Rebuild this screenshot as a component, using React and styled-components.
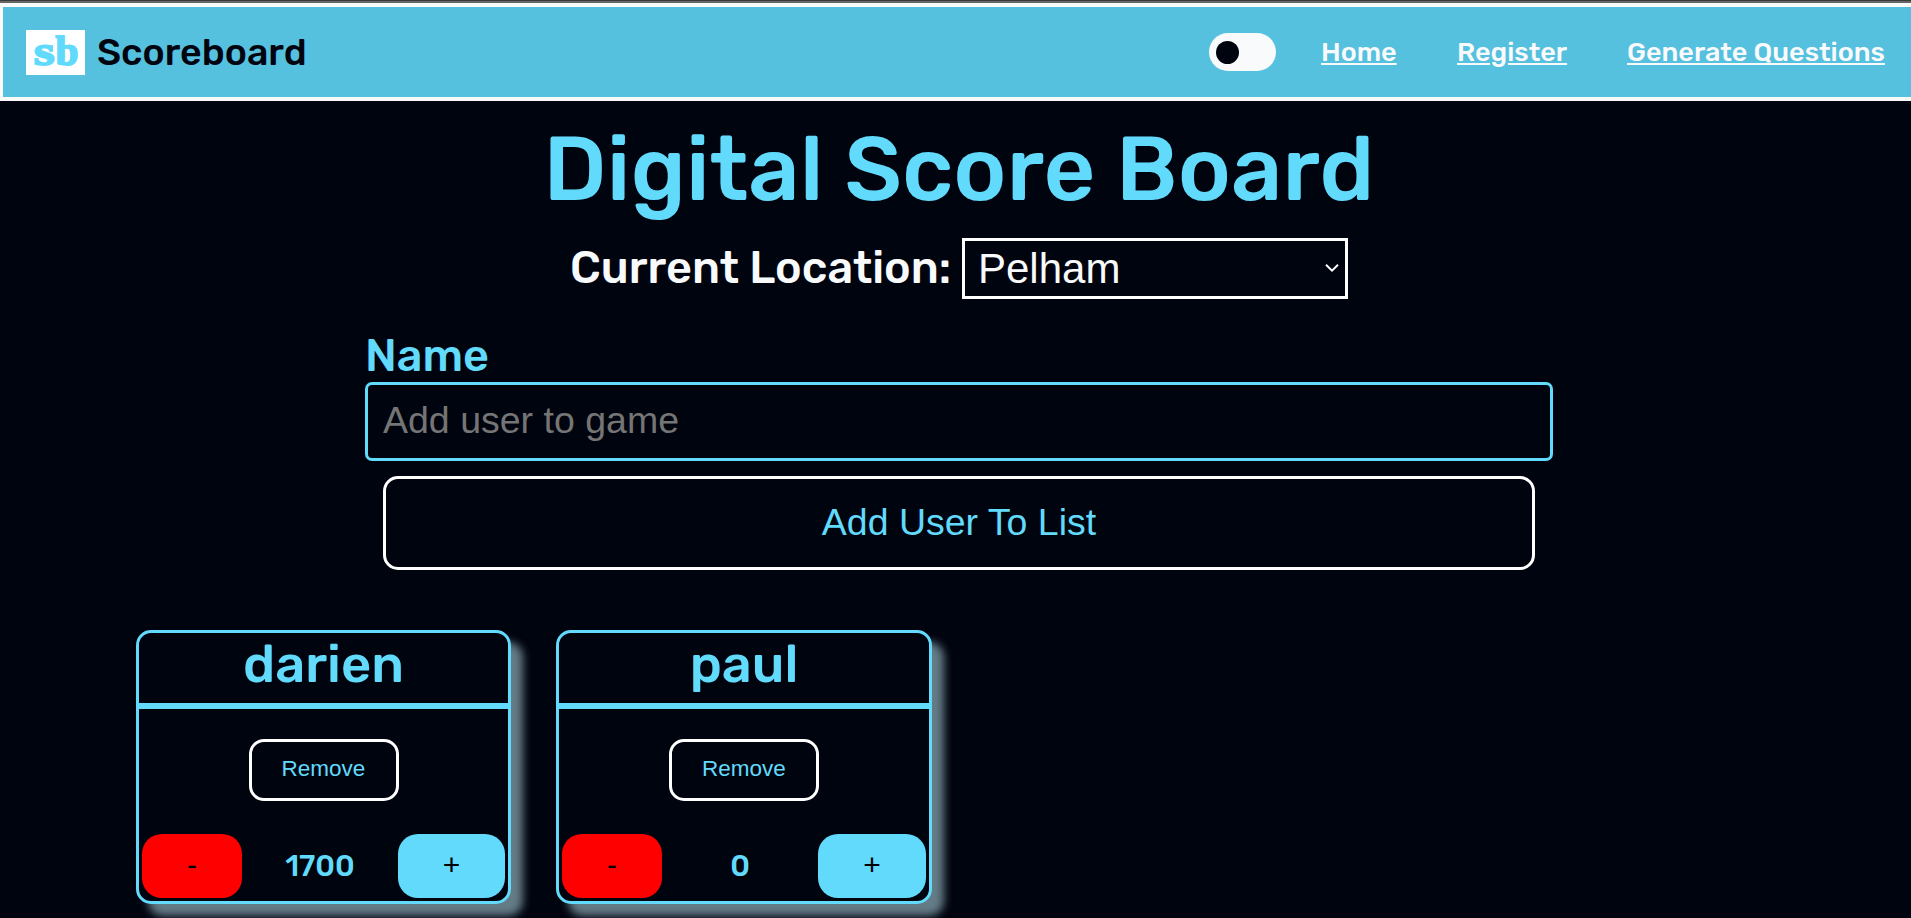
import React from "react";
import styled, { createGlobalStyle } from "styled-components";

const accent = "#61dafb";
const ink = "#00040f";
const light = "#f9fafb";
const display = `Rubik, Roboto, "Liberation Sans", sans-serif`;
const plain = `Arial, "Liberation Sans", sans-serif`;

const GlobalStyle = createGlobalStyle`
  *, *::before, *::after { box-sizing: border-box; }
  html, body { margin: 0; background: ${ink}; }
  body { overflow: hidden; font-family: ${display}; font-weight: 500; color: ${light}; }
  h1, h2, p { margin: 0; font-weight: 500; }
`;

const Page = styled.div`
  height: 100vh;
  overflow: hidden;
`;

const TopEdge = styled.div`
  height: 3px;
  border-top: 1px solid #3b3b3b;
  background: #666;
`;

const Header = styled.header`
  display: flex;
  align-items: center;
  justify-content: space-between;
  height: 98px;
  padding: 0 26px 0 23px;
  background: #56c0df;
  border: 4px solid ${light};
  border-left-width: 3px;
  border-right: 0;
`;

const Brand = styled.div`
  display: flex;
  align-items: center;
  gap: 12px;
`;

const Logo = styled.svg`
  display: block;
  overflow: visible;
  width: 59px;
  height: 45px;
  background: #fff;
`;

const LogoLetter = styled.text`
  font: 700 43px "Liberation Serif", serif;
  fill: ${accent};
  stroke: ${accent};
  stroke-width: 1.8px;
`;

const BrandName = styled.span`
  font-size: 37.5px;
  line-height: 45px;
  color: ${ink};
`;

const Nav = styled.nav`
  display: flex;
  align-items: center;
`;

const Toggle = styled.button`
  display: flex;
  align-items: center;
  width: 67px;
  height: 38px;
  margin-right: 45px;
  padding: 0 7px;
  border: 0;
  border-radius: 19px;
  background: ${light};
`;

const Knob = styled.span`
  width: 23px;
  height: 23px;
  border-radius: 50%;
  background: ${ink};
`;

const NavLink = styled.a`
  width: ${(p) => p.$width}px;
  margin-left: ${(p) => p.$gap || 0}px;
  white-space: nowrap;
  font-size: 27px;
  line-height: 34px;
  color: ${light};
  text-decoration: underline;
`;

const Title = styled.h1`
  margin-top: 15px;
  padding-left: 7px;
  text-align: center;
  font-size: 90px;
  line-height: 107px;
  color: ${accent};
`;

const LocationRow = styled.div`
  display: flex;
  align-items: center;
  justify-content: flex-end;
  width: 1348px;
  height: 61px;
  margin-top: 15px;
`;

const LocationLabel = styled.label`
  width: 392px;
  padding-bottom: 2px;
  white-space: nowrap;
  font-size: 45px;
  line-height: 54px;
`;

const SelectBox = styled.div`
  position: relative;
  width: 386px;
  height: 61px;
`;

const Select = styled.select`
  appearance: none;
  width: 100%;
  height: 100%;
  padding: 0 13px;
  border: 3px solid #fff;
  border-radius: 0;
  background: ${ink};
  color: ${light};
  font: 400 42px ${plain};
`;

const Chevron = styled.svg`
  position: absolute;
  right: 9px;
  top: 25px;
  width: 14px;
  height: 10px;
  pointer-events: none;
`;

const Form = styled.form`
  display: flex;
  flex-direction: column;
  width: 1188px;
  margin: 30px 0 0 365px;
`;

const FieldLabel = styled.label`
  font-size: 45px;
  line-height: 53px;
  color: ${accent};
`;

const Input = styled.input`
  height: 79px;
  padding: 0 15px 2px;
  border: 3px solid ${accent};
  border-radius: 7px;
  background: ${ink};
  color: ${light};
  font: 400 37.5px ${plain};
  &::placeholder { color: #757575; }
`;

const OutlineButton = styled.button`
  border: 3px solid #fff;
  border-radius: 15px;
  background: ${ink};
  color: ${accent};
  padding: 0 0 2px;
  font: 400 22.5px ${plain};
`;

const AddButton = styled(OutlineButton)`
  height: 94px;
  margin: 15px 18px 0;
  padding-bottom: 1px;
  font-size: 37.5px;
`;

const RemoveButton = styled(OutlineButton)`
  width: 150px;
  height: 62px;
  margin: 30px auto 33px;
`;

const Cards = styled.section`
  display: flex;
  gap: 45px;
  margin: 60px 0 0 136px;
`;

const Card = styled.article`
  display: flex;
  flex-direction: column;
  width: ${(p) => p.$width}px;
  height: 274px;
  border: 3px solid ${accent};
  border-radius: 15px;
  background: ${ink};
  box-shadow: 12px 12px 8px #647c87;
`;

const PlayerName = styled.h2`
  height: 76px;
  border-bottom: 6px solid ${accent};
  text-align: center;
  font-size: 52.5px;
  line-height: 62px;
  color: ${accent};
`;

const ScoreRow = styled.div`
  display: flex;
  justify-content: space-between;
  align-items: center;
  padding: 0 3px;
`;

const ScoreButton = styled.button`
  width: ${(p) => p.$width}px;
  height: 64px;
  padding: 0 0 2px;
  border: 0;
  border-radius: 20px;
  background: ${(p) => p.$fill};
  color: #000;
  font: 400 30px ${plain};
`;

const Score = styled.p`
  font-size: 30px;
  color: ${accent};
`;

const players = [
  { name: "darien", score: 1700, width: 375 },
  { name: "paul", score: 0, width: 376 },
];

export default function App() {
  return (
    <>
      <GlobalStyle />
      <Page>
        <TopEdge />
        <Header>
          <Brand>
            <Logo viewBox="0 0 59 45">
              <LogoLetter x="8" y="34.5" textLength="21" lengthAdjust="spacingAndGlyphs">s</LogoLetter>
              <LogoLetter x="29.5" y="34.5" textLength="23" lengthAdjust="spacingAndGlyphs">b</LogoLetter>
            </Logo>
            <BrandName>Scoreboard</BrandName>
          </Brand>
          <Nav>
            <Toggle aria-label="Toggle theme"><Knob /></Toggle>
            <NavLink href="#" $width={76}>Home</NavLink>
            <NavLink href="#" $width={110} $gap={60}>Register</NavLink>
            <NavLink href="#" $width={258} $gap={60}>Generate Questions</NavLink>
          </Nav>
        </Header>
        <Title>Digital Score Board</Title>
        <LocationRow>
          <LocationLabel htmlFor="location">Current Location:</LocationLabel>
          <SelectBox>
            <Select id="location" defaultValue="Pelham">
              <option>Pelham</option>
            </Select>
            <Chevron viewBox="0 0 14 10" fill="none" stroke="#fff" strokeWidth="2">
              <path d="M1 1.8 7 7.6 13 1.8" />
            </Chevron>
          </SelectBox>
        </LocationRow>
        <Form onSubmit={(e) => e.preventDefault()}>
          <FieldLabel htmlFor="name">Name</FieldLabel>
          <Input id="name" placeholder="Add user to game" />
          <AddButton>Add User To List</AddButton>
        </Form>
        <Cards>
          {players.map((p) => (
            <Card key={p.name} $width={p.width}>
              <PlayerName>{p.name}</PlayerName>
              <RemoveButton>Remove</RemoveButton>
              <ScoreRow>
                <ScoreButton $width={100} $fill="#ff0000">-</ScoreButton>
                <Score>{p.score}</Score>
                <ScoreButton $width={p.width - 268} $fill={accent}>+</ScoreButton>
              </ScoreRow>
            </Card>
          ))}
        </Cards>
      </Page>
    </>
  );
}
